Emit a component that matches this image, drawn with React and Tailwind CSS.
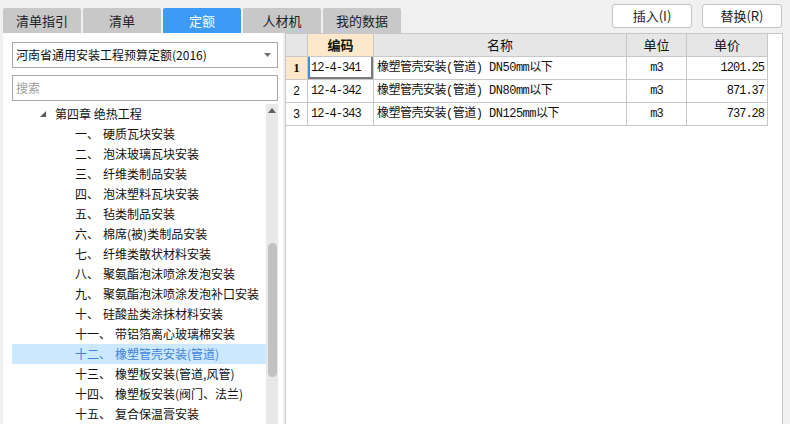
import React from 'react'

const cjk = { fontFamily: '"Noto Sans CJK SC", "Liberation Sans", sans-serif' }
const mono = { fontFamily: '"Liberation Mono", "Noto Sans CJK SC", monospace' }

const tabs = ['清单指引', '清单', '定额', '人材机', '我的数据']

const treeItems = [
  ['一、', '硬质瓦块安装'],
  ['二、', '泡沫玻璃瓦块安装'],
  ['三、', '纤维类制品安装'],
  ['四、', '泡沫塑料瓦块安装'],
  ['五、', '毡类制品安装'],
  ['六、', '棉席(被)类制品安装'],
  ['七、', '纤维类散状材料安装'],
  ['八、', '聚氨酯泡沫喷涂发泡安装'],
  ['九、', '聚氨酯泡沫喷涂发泡补口安装'],
  ['十、', '硅酸盐类涂抹材料安装'],
  ['十一、', '带铝箔离心玻璃棉安装'],
  ['十二、', '橡塑管壳安装(管道)'],
  ['十三、', '橡塑板安装(管道,风管)'],
  ['十四、', '橡塑板安装(阀门、法兰)'],
  ['十五、', '复合保温膏安装'],
]

const rows = [
  { no: '1', code: '12-4-341', name: '橡塑管壳安装(管道) DN50mm以下', unit: 'm3', price: '1201.25' },
  { no: '2', code: '12-4-342', name: '橡塑管壳安装(管道) DN80mm以下', unit: 'm3', price: '871.37' },
  { no: '3', code: '12-4-343', name: '橡塑管壳安装(管道) DN125mm以下', unit: 'm3', price: '737.28' },
]

const Tabs = () => (
  <div className="flex gap-[2px] self-end pl-[3px]">
    {tabs.map((t) => {
      const active = t === '定额'
      return (
        <div
          key={t}
          style={cjk}
          className={`w-[78px] h-[25px] flex items-center justify-center text-[13px] rounded-t-[2px] ${
            active ? 'bg-[#3d9bf6] text-white' : 'bg-[#c8c8c8] text-[#222]'
          }`}
        >
          {t}
        </div>
      )
    })}
  </div>
)

const Tree = () => (
  <div className="flex flex-1 min-h-0 mt-[3px]">
    <div className="w-[254px] flex flex-col" style={cjk}>
      {/* chapter node */}
      <div className="h-[20px] flex items-center text-[12px] text-[#111]">
        <svg width="6" height="6" viewBox="0 0 6 6" className="ml-[28px]">
          <path d="M6 0 L6 6 L0 6 Z" fill="#5a5a5a" />
        </svg>
        <span className="ml-[9px]">第四章 绝热工程</span>
      </div>
      {treeItems.map(([n, label]) => {
        const sel = n === '十二、'
        return (
          <div
            key={n}
            className={`h-[20px] flex items-center text-[12px] ${
              sel ? 'bg-[#cce8ff] text-[#3f84d8]' : 'text-[#111]'
            }`}
          >
            <span className="ml-[63px]">{n}</span>
            <span className="ml-[4px] whitespace-nowrap">{label}</span>
          </div>
        )
      })}
    </div>
    {/* scrollbar */}
    <div className="w-[12px] bg-[#e8e8e8] flex flex-col items-center">
      <svg width="8" height="5" viewBox="0 0 8 5" className="mt-[4px]">
        <path d="M4 0 L8 5 L0 5 Z" fill="#606060" />
      </svg>
      <div className="w-[9px] h-[134px] mt-[130px] rounded-full bg-[#c2c2c2]" />
    </div>
  </div>
)

const LeftPanel = () => (
  <div className="w-[280px] ml-[3px] bg-white flex flex-col pl-[9px] pr-[5px] pt-[9px]">
    <div
      style={cjk}
      className="h-[26px] border border-[#a8a8a8] flex items-center justify-between pl-[3px] pr-[6px] text-[12px] text-[#111]"
    >
      <span>河南省通用安装工程预算定额(2016)</span>
      <svg width="7" height="4" viewBox="0 0 7 4">
        <path d="M0 0 L7 0 L3.5 4 Z" fill="#707070" />
      </svg>
    </div>
    <div
      style={cjk}
      className="h-[26px] mt-[7px] border border-[#a8a8a8] flex items-center pl-[3px] text-[12px] text-[#a0a0a0]"
    >
      搜索
    </div>
    <Tree />
  </div>
)

const cell = 'h-[23px] border-r border-b border-[#c8c8c8] flex items-center'

const Grid = () => (
  <div className="flex flex-col">
    <div className="flex" style={cjk}>
      <div className={`${cell} w-[22px] bg-[#e6e6e6]`} />
      <div className={`${cell} w-[66px] bg-[#fde8cc] justify-center text-[13px] font-bold text-[#111]`}>编码</div>
      <div className={`${cell} w-[253px] bg-[#e6e6e6] justify-center text-[13px] text-[#111]`}>名称</div>
      <div className={`${cell} w-[60px] bg-[#e6e6e6] justify-center text-[13px] text-[#111]`}>单位</div>
      <div className={`${cell} w-[81px] bg-[#e6e6e6] justify-center text-[13px] text-[#111]`}>单价</div>
    </div>
    {rows.map((r, i) => (
      <div key={r.no} className="flex text-[12px] text-[#111]">
        <div
          className={`${cell} w-[22px] justify-center ${
            i === 0 ? 'bg-[#fde8cc] font-bold text-[13px]' : 'bg-white'
          }`}
          style={{ fontFamily: i === 0 ? '"Liberation Serif", serif' : '"Liberation Sans", sans-serif' }}
        >
          {r.no}
        </div>
        <div className={`${cell} w-[66px] pl-[3px] relative tracking-[-1px]`} style={mono}>
          {r.code}
          {i === 0 && (
            <div className="absolute inset-0 border-l-2 border-l-[#3d8ee6] border-r-2 border-r-[#7a7a7a] border-b-2 border-b-[#7a7a7a]" />
          )}
        </div>
        <div className={`${cell} w-[253px] pl-[3px] whitespace-nowrap tracking-[-0.5px]`} style={mono}>
          {r.name}
        </div>
        <div className={`${cell} w-[60px] justify-center tracking-[-1px]`} style={mono}>
          {r.unit}
        </div>
        <div className={`${cell} w-[81px] justify-end pr-[3px] tracking-[-1px]`} style={mono}>
          {r.price}
        </div>
      </div>
    ))}
  </div>
)

export default function App() {
  return (
    <div className="w-[790px] h-[424px] bg-[#f0f0f0] flex flex-col overflow-hidden">
      <div className="h-[33px] flex justify-between shrink-0">
        <Tabs />
        <div className="flex gap-[10px] mt-[4px] mr-[8px] self-start" style={cjk}>
          <div className="w-[80px] h-[24px] bg-white border border-[#c4c4c4] rounded-[3px] flex items-center justify-center text-[13px] text-[#222]">
            插入(I)
          </div>
          <div className="w-[80px] h-[24px] bg-white border border-[#c4c4c4] rounded-[3px] flex items-center justify-center text-[13px] text-[#222]">
            替换(R)
          </div>
        </div>
      </div>
      <div className="flex flex-1 min-h-0">
        <LeftPanel />
        <div className="w-[498px] ml-[2px] bg-white border-l border-r border-t border-[#c8c8c8]">
          <Grid />
        </div>
      </div>
    </div>
  )
}
